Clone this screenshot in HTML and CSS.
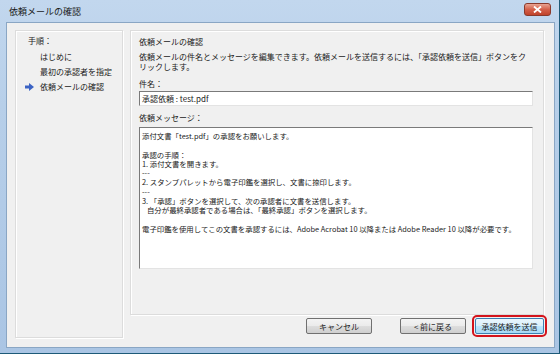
FILE: index.html
```html
<!DOCTYPE html>
<html lang="ja">
<head>
    <meta charset="UTF-8">
    <title>依頼メールの確認</title>
    <link rel="stylesheet" href="styles.css">
</head>
<body>
    <div class="window">
        <div class="titlebar">
            <span class="title">依頼メールの確認</span>
            <button class="close-btn">
                <svg width="9" height="7" viewBox="0 0 9 7">
                    <path d="M1 0.5 L8 6.5 M8 0.5 L1 6.5" stroke="#fff" stroke-width="1.8" fill="none"/>
                </svg>
            </button>
        </div>

        <div class="client">
            <div class="steps">
                <div class="steps-label">手順：</div>
                <ul class="step-list">
                    <li>はじめに</li>
                    <li>最初の承認者を指定</li>
                    <li class="current">
                        <svg class="step-arrow" width="9" height="8" viewBox="0 0 9 8">
                            <path d="M0 2.5 H4 V0 L9 4 L4 8 V5.5 H0 Z" fill="#3b63c4"/>
                        </svg>
                        依頼メールの確認
                    </li>
                </ul>
            </div>

            <div class="main">
                <div class="panel">
                    <div class="panel-title">依頼メールの確認</div>
                    <p class="desc">依頼メールの件名とメッセージを編集できます。依頼メールを送信するには、「承認依頼を送信」ボタンをクリックします。</p>

                    <div class="field-label">件名：</div>
                    <div class="textbox subject">承認依頼 : test.pdf</div>

                    <div class="field-label">依頼メッセージ：</div>
                    <div class="textbox message">添付文書「test.pdf」の承認をお願いします。

承認の手順：
1. 添付文書を開きます。
---
2. スタンプパレットから電子印鑑を選択し、文書に捺印します。
---
3. 「承認」ボタンを選択して、次の承認者に文書を送信します。
   自分が最終承認者である場合は、「最終承認」ボタンを選択します。

電子印鑑を使用してこの文書を承認するには、Adobe Acrobat 10 以降または Adobe Reader 10 以降が必要です。</div>
                </div>

                <div class="buttons">
                    <button class="btn">キャンセル</button>
                    <button class="btn back">&lt; 前に戻る</button>
                    <button class="btn primary">承認依頼を送信</button>
                </div>
            </div>
        </div>
    </div>
</body>
</html>
```

FILE: styles.css
```css
* {
    margin: 0;
    padding: 0;
    box-sizing: border-box;
}

body {
    font-family: "Noto Sans CJK JP", sans-serif;
    font-size: 8px;
    color: #1a1a1a;
    background: #ffffff;
}

.window {
    width: 560px;
    height: 354px;
    display: flex;
    flex-direction: column;
    background: linear-gradient(to bottom, #c2d7ee 0%, #b7cfe9 30%, #aac5e4 100%);
    border-right: 1px solid #1d5a78;
    border-bottom: 1px solid #1d5a78;
    padding: 0 4px 5px 6px;
}

.titlebar {
    height: 22px;
    display: flex;
    align-items: center;
    justify-content: space-between;
    padding-left: 3px;
}

.title {
    font-size: 9px;
    color: #1b1b1b;
}

.close-btn {
    width: 27px;
    height: 13px;
    margin-right: 4px;
    margin-top: -4px;
    border: 1px solid #8a3a2c;
    border-radius: 3px;
    background: linear-gradient(to bottom, #e8a493 0%, #d4604a 50%, #c0432c 100%);
    display: flex;
    align-items: center;
    justify-content: center;
}

.client {
    flex: 1;
    background: #f0f0f0;
    border: 1px solid #8aa6c4;
    display: grid;
    grid-template-columns: 108px 1fr;
    gap: 7px;
    padding: 7px 10px 9px 8px;
}

/* left step list */
.steps {
    border: 1px solid #dcdcdc;
    box-shadow: inset 1px 1px 0 #ffffff, 1px 1px 0 #ffffff;
    padding: 4px 0 0 12px;
}

.steps-label {
    line-height: 11px;
    margin-bottom: 5px;
}

.step-list {
    list-style: none;
}

.step-list li {
    position: relative;
    line-height: 11px;
    padding-left: 12px;
    margin-bottom: 4px;
}

.step-arrow {
    position: absolute;
    left: -3px;
    top: 2px;
}

/* right side */
.main {
    display: flex;
    flex-direction: column;
}

.panel {
    height: 285px;
    border: 1px solid #dcdcdc;
    box-shadow: inset 1px 1px 0 #ffffff, 1px 1px 0 #ffffff;
    padding: 5px 10px 0 8px;
}

.panel-title {
    line-height: 11px;
    margin-bottom: 5px;
}

.desc {
    line-height: 10px;
    margin-bottom: 6px;
}

.field-label {
    line-height: 11px;
    margin-bottom: 2px;
}

.textbox {
    background: #ffffff;
    border: 1px solid #e3e3e3;
    border-top-color: #7a7a7a;
    border-left-color: #7a7a7a;
    padding: 1px 2px;
}

.subject {
    height: 15px;
    line-height: 12px;
    margin-bottom: 6px;
}

.message {
    height: 142px;
    margin-top: 4px;
    white-space: pre-wrap;
    font-size: 7.4px;
    line-height: 9.3px;
    padding-top: 3px;
}

.buttons {
    display: flex;
    justify-content: flex-end;
    align-items: center;
    padding-top: 3px;
}

.btn {
    font-family: inherit;
    font-size: 8px;
    width: 66px;
    height: 16px;
    border: 1px solid #707070;
    border-radius: 2px;
    background: linear-gradient(to bottom, #f3f3f3 0%, #ebebeb 50%, #dddddd 51%, #cfcfcf 100%);
    color: #1a1a1a;
}

.back {
    margin-left: 28px;
}

.primary {
    width: 69px;
    margin-left: 9px;
    border-color: #3c7fb1;
    background: linear-gradient(to bottom, #eaf6fd 0%, #d9f0fc 50%, #bee6fd 51%, #a7d9f5 100%);
    outline: 2px solid #d3141c;
    outline-offset: 1px;
}
```
